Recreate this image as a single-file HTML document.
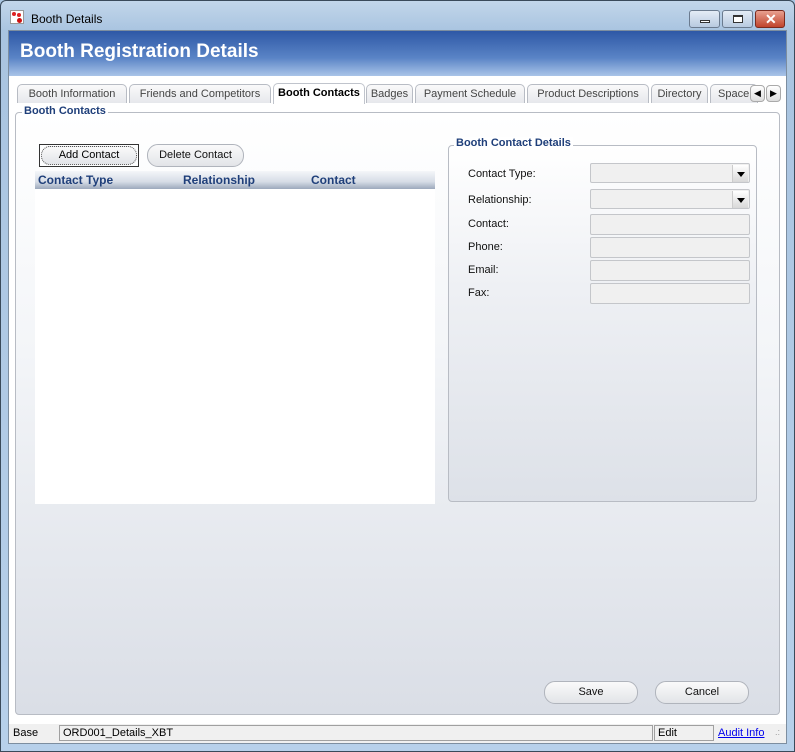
<!DOCTYPE html>
<html><head><style>
*{box-sizing:border-box;margin:0;padding:0}
body{width:795px;height:752px;overflow:hidden;font-family:"Liberation Sans",sans-serif;font-size:12px;position:relative;background:#aac6e2}
.abs{position:absolute}
#frame{left:0;top:0;width:795px;height:752px;border:1px solid #3a4a5a;border-radius:6px 6px 0 0;background:linear-gradient(#c2d6ea,#a9c4e0 30px,#b7d0ea)}
#client{left:8px;top:30px;width:779px;height:714px;background:#fff;border:1px solid #7d8ea0}
#hdr{left:0;top:0;width:777px;height:45px;background:linear-gradient(#2e58a6,#5a84c6 60%,#a9c4e8)}
#hdr span{position:absolute;left:11px;top:10px;color:#fff;font-weight:bold;font-size:19px}
.tab{position:absolute;top:53px;height:19px;border:1px solid #b8bcc4;border-bottom:none;border-radius:5px 5px 0 0;background:linear-gradient(#fafafa,#e6e8ec);color:#444;font-size:11px;padding:3px 0 0 0;text-align:center;white-space:nowrap;overflow:hidden}
.tab.act{background:#fff;color:#000;font-weight:bold;top:52px;height:21px;border-color:#c0c4cc}
#panel{left:6px;top:81px;width:765px;height:603px;border:1px solid #b8bcc4;border-radius:4px;background:linear-gradient(#fff,#f3f5f8 40%,#dadee6)}
.leg{position:absolute;background:#fff;color:#1f3f7a;font-weight:bold;font-size:11px;padding:0 2px}
.btn{position:absolute;height:22px;border:1px solid #b0b4bc;border-radius:11px;background:linear-gradient(#fafafa,#e2e4e8);font-size:11px;text-align:center;line-height:20px;color:#111}
#grid{left:26px;top:140px;width:400px;height:333px;background:#fff}
#gh{left:0;top:0;width:400px;height:18px;background:linear-gradient(#f4f6f9,#d6dce6 60%,#9ca8bc);font-weight:bold;color:#1f3f7a;font-size:12px}
#gh span{position:absolute;top:2px}
#det{left:439px;top:114px;width:309px;height:357px;border:1px solid #b8bcc4;border-radius:4px;background:linear-gradient(#fff,#eef0f4 40%,#dde1e8)}
.lbl{position:absolute;left:19px;font-size:11px;color:#111}
.inp{position:absolute;left:141px;width:160px;height:21px;background:#f0f0f0;border:1px solid #c4c6ca;border-radius:2px}
.dd{position:absolute;right:1px;top:1px;width:16px;height:17px;background:linear-gradient(#fff,#d8d8d8);border-left:1px solid #ccc}
.dd:after{content:"";position:absolute;left:4px;top:7px;border:4px solid transparent;border-top:5px solid #000;border-bottom:none}
#status{left:0;top:693px;width:777px;height:19px;background:#f0f0f0;font-size:11px}
.sb{position:absolute;top:1px;height:16px;border:1px solid #a0a0a0;background:#f0f0f0;padding:1px 3px}
.wb{position:absolute;top:9px;height:18px;border:1px solid #6b7b8f;border-radius:3px;background:linear-gradient(#e4ecf6,#b8cae0)}
</style></head><body>
<div id="frame" class="abs">
 <div class="abs" style="left:9px;top:9px;width:14px;height:14px;background:#fff;border:1px solid #999"><div class="abs" style="left:1px;top:1px;width:4px;height:4px;background:#d22;border-radius:2px"></div><div class="abs" style="left:6px;top:2px;width:4px;height:4px;background:#d22;border-radius:2px"></div><div class="abs" style="left:6px;top:7px;width:5px;height:5px;background:#c11;border-radius:3px"></div></div>
 <div class="abs" style="left:30px;top:11px;font-size:12px;color:#000">Booth Details</div>
 <div class="wb" style="left:688px;width:31px"><div class="abs" style="left:10px;top:9px;width:10px;height:3px;border:1px solid #333;background:#fff"></div></div>
 <div class="wb" style="left:721px;width:31px"><div class="abs" style="left:10px;top:4px;width:10px;height:8px;border:1px solid #333;border-top-width:2px;background:#fff"></div></div>
 <div class="wb" style="left:754px;width:30px;background:linear-gradient(#e8a090,#c0442c);border-color:#7a2a1e"><div class="abs" style="left:9px;top:0px;color:#fff;font-weight:bold;font-size:14px">✕</div></div>
</div>
<div id="client" class="abs">
 <div id="hdr" class="abs"><span>Booth Registration Details</span></div>
 <div class="tab" style="left:8px;width:110px">Booth Information</div>
 <div class="tab" style="left:120px;width:142px">Friends and Competitors</div>
 <div class="tab act" style="left:264px;width:92px">Booth Contacts</div>
 <div class="tab" style="left:357px;width:47px">Badges</div>
 <div class="tab" style="left:406px;width:110px">Payment Schedule</div>
 <div class="tab" style="left:518px;width:122px">Product Descriptions</div>
 <div class="tab" style="left:642px;width:57px">Directory</div>
 <div class="tab" style="left:701px;width:48px;text-align:left;padding-left:7px">Space</div>
 <div class="abs" style="left:741px;top:54px;width:15px;height:17px;border:1px solid #aaa;border-radius:4px;background:linear-gradient(#fff,#ddd);font-size:9px;text-align:center;line-height:15px">◀</div>
 <div class="abs" style="left:757px;top:54px;width:15px;height:17px;border:1px solid #aaa;border-radius:4px;background:linear-gradient(#fff,#ddd);font-size:9px;text-align:center;line-height:15px">▶</div>
 <div id="panel" class="abs"></div>
 <div class="leg" style="left:13px;top:74px">Booth Contacts</div>
 <div class="abs" style="left:30px;top:113px;width:100px;height:23px;border:1px solid #333;padding:1px"><div style="border:1px dotted #555;height:19px;border-radius:9px;background:linear-gradient(#fafafa,#e2e4e8);font-size:11px;text-align:center;line-height:17px">Add Contact</div></div>
 <div class="btn" style="left:138px;top:113px;width:97px;height:23px">Delete Contact</div>
 <div id="grid" class="abs"><div id="gh" class="abs"><span style="left:3px">Contact Type</span><span style="left:148px">Relationship</span><span style="left:276px">Contact</span></div></div>
 <div id="det" class="abs">
  <div class="lbl" style="top:22px">Contact Type:</div><div class="inp" style="top:17px;height:20px"><div class="dd"></div></div>
  <div class="lbl" style="top:48px">Relationship:</div><div class="inp" style="top:43px;height:20px"><div class="dd"></div></div>
  <div class="lbl" style="top:72px">Contact:</div><div class="inp" style="top:68px"></div>
  <div class="lbl" style="top:95px">Phone:</div><div class="inp" style="top:91px"></div>
  <div class="lbl" style="top:118px">Email:</div><div class="inp" style="top:114px"></div>
  <div class="lbl" style="top:141px">Fax:</div><div class="inp" style="top:137px"></div>
 </div>
 <div class="leg" style="left:445px;top:106px;background:#fff">Booth Contact Details</div>
 <div class="btn" style="left:535px;top:650px;width:94px;height:23px">Save</div>
 <div class="btn" style="left:646px;top:650px;width:94px;height:23px">Cancel</div>
 <div id="status" class="abs">
  <div class="abs" style="left:4px;top:3px">Base</div>
  <div class="sb" style="left:50px;width:594px">ORD001_Details_XBT</div>
  <div class="sb" style="left:645px;width:60px">Edit</div>
  <div class="abs" style="left:709px;top:3px;color:#00e;text-decoration:underline">Audit Info</div>
  <div class="abs" style="left:766px;top:3px;color:#999;font-size:9px">.:</div>
 </div>
</div>
</body></html>
